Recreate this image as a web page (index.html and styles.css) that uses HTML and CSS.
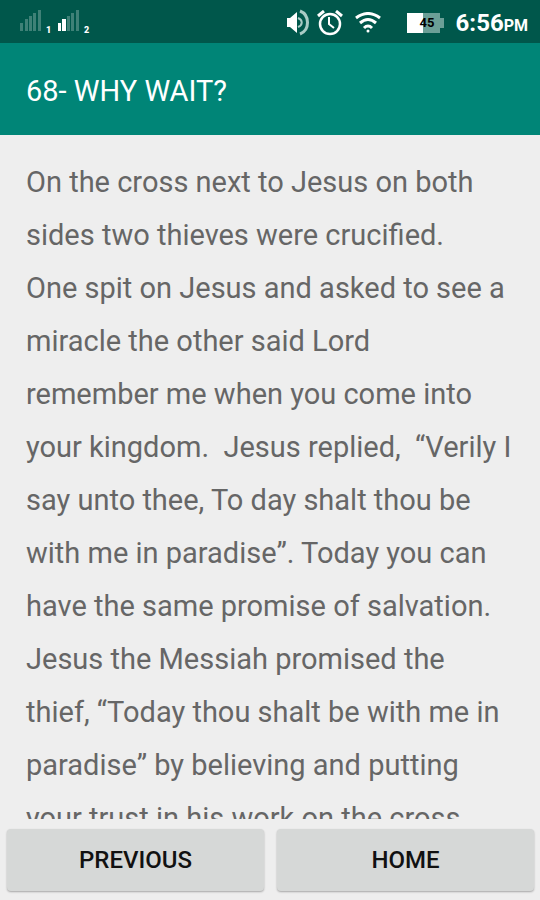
FILE: index.html
```html
<!DOCTYPE html>
<html lang="en">
<head>
<meta charset="utf-8">
<meta name="viewport" content="width=device-width, initial-scale=1">
<title>68- WHY WAIT?</title>
<link rel="stylesheet" href="styles.css">
</head>
<body>
<div class="status">
  <div class="signals">
    <svg width="22" height="22" viewBox="0 0 22 22" aria-hidden="true">
      <path class="dim" d="M0 13h3v8H0zM5 9h3v12H5zM9 6h3v15H9zM13 3h3v18h-3zM18 0h3v21h-3z"/>
    </svg>
    <span class="sim">1</span>
    <svg width="22" height="22" viewBox="0 0 22 22" aria-hidden="true">
      <path class="dim" d="M9 6h3v15H9zM13 3h3v18h-3zM18 0h3v21h-3z"/>
      <path fill="#fff" d="M0 13h3v8H0zM4 9h4v12H4z"/>
    </svg>
    <span class="sim">2</span>
  </div>
  <div class="indicators">
    <svg width="24" height="28" viewBox="0 0 24 28" fill="none" aria-hidden="true">
      <path fill="#fff" d="M2 9h3l7-6v21l-7-6H2z"/>
      <path stroke="#a9cbc5" stroke-width="2" d="M13 9c5 2 5 7 0 9"/>
      <path stroke="#a9cbc5" stroke-width="3" d="M15 2c10 4 10 19 0 23"/>
    </svg>
    <svg width="26" height="26" viewBox="0 0 26 26" fill="none" stroke="#fff" aria-hidden="true">
      <circle cx="13" cy="14" r="10" stroke-width="2.5"/>
      <path stroke-width="2" d="M12 7v7l5 4"/>
      <path stroke-width="3" d="M1 6l6-5M19 1l6 5"/>
    </svg>
    <svg width="26" height="22" viewBox="0 0 26 22" fill="none" stroke="#fff" stroke-width="3" aria-hidden="true">
      <path d="M1 6Q13-3 25 6M5 11q8-7 16 0M9 16q4-4 8 0"/>
      <circle cx="13" cy="19" r="1.5" fill="#fff" stroke="none"/>
    </svg>
    <div class="battery">
      <svg width="37" height="20" viewBox="0 0 37 20" aria-hidden="true">
        <path fill="#6b9f97" d="M0 0h33v5h4v10h-4v5H0z"/>
        <path fill="#fff" d="M0 0h16v20H0z"/>
      </svg>
      <span class="level">45</span>
    </div>
    <div class="clock">6:56<span class="meridiem">PM</span></div>
  </div>
</div>
<header class="bar"><h1 class="title">68- WHY WAIT?</h1></header>
<main class="content">
<p class="story">On the cross next to Jesus on both
sides two thieves were crucified.
One spit on Jesus and asked to see a
miracle the other said Lord
remember me when you come into
your kingdom.  Jesus replied,  “Verily I
say unto thee, To day shalt thou be
with me in paradise”. Today you can
have the same promise of salvation.
Jesus the Messiah promised the
thief, “Today thou shalt be with me in
paradise” by believing and putting
your trust in his work on the cross</p>
</main>
<nav class="actions">
  <button class="action" type="button">PREVIOUS</button>
  <button class="action" type="button">HOME</button>
</nav>
</body>
</html>
```
FILE: styles.css
```css
* {
  box-sizing: border-box;
}

body {
  margin: 0;
  height: 100vh;
  display: flex;
  flex-direction: column;
  overflow: hidden;
  background: #eeeeee;
  color: #666666;
  font-family: Roboto, sans-serif;
}

.status {
  flex: none;
  height: 43px;
  display: flex;
  justify-content: space-between;
  align-items: center;
  padding: 2px 12px 0 20px;
  background: #00574b;
  color: #ffffff;
}

.signals {
  display: flex;
  align-items: flex-end;
  gap: 4px;
  padding-bottom: 4px;
}

.dim {
  fill: #3f8177;
}

.sim {
  width: 8px;
  font-size: 9px;
  line-height: 4px;
  font-weight: 900;
}

.indicators {
  display: flex;
  align-items: center;
  gap: 12px;
}

.indicators > svg:first-child {
  margin-right: -4px;
}

.battery {
  position: relative;
  display: flex;
  margin-left: 14px;
}

.level {
  position: absolute;
  left: 13px;
  top: 0;
  color: #000000;
  font-size: 13px;
  line-height: 20px;
  font-weight: 700;
}

.clock {
  padding-top: 4px;
  font-size: 24px;
  line-height: 30px;
  font-weight: 700;
}

.meridiem {
  font-size: 16px;
}

.bar {
  flex: none;
  height: 92px;
  display: flex;
  align-items: center;
  padding: 4px 26px 0;
  background: #008577;
}

.title {
  margin: 0;
  color: #ffffff;
  font-size: 29px;
  line-height: 36px;
  font-weight: 400;
}

.content {
  flex: 1;
  min-height: 0;
  overflow: hidden;
  padding: 21px 20px 0 26px;
}

.story {
  margin: 0;
  font-size: 29px;
  line-height: 53px;
  white-space: pre-wrap;
}

.actions {
  flex: none;
  display: flex;
  gap: 13px;
  padding: 10px 6px 9px 7px;
}

.action {
  flex: 1;
  height: 62px;
  border: 0;
  border-radius: 4px;
  background: #d6d8d7;
  box-shadow: 0 1px 2px rgba(0, 0, 0, 0.3);
  color: #111111;
  font-family: inherit;
  font-size: 24px;
  font-weight: 500;
}
```
